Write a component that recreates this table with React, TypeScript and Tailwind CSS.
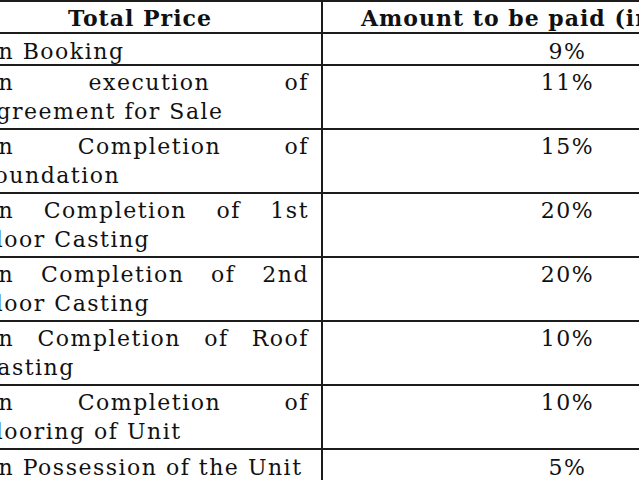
const rows = [
  { label: "On Booking", amount: "9%", tall: false },
  { label: "On execution of Agreement for Sale", amount: "11%", tall: true },
  { label: "On Completion of Foundation", amount: "15%", tall: true },
  { label: "On Completion of 1st Floor Casting", amount: "20%", tall: true },
  { label: "On Completion of 2nd Floor Casting", amount: "20%", tall: true },
  { label: "On Completion of Roof Casting", amount: "10%", tall: true },
  { label: "On Completion of Flooring of Unit", amount: "10%", tall: true },
  { label: "On Possession of the Unit", amount: "5%", tall: false },
];

export default function App() {
  return (
    <div className="w-[639px] h-[480px] overflow-hidden bg-white">
      <table
        className="ml-[-29px] table-fixed border-collapse text-[#111] font-['DejaVu_Serif',serif] text-[22px] tracking-[1.5px]"
        style={{ width: 841 }}
      >
        <colgroup>
          <col className="w-[350px]" />
          <col className="w-[491px]" />
        </colgroup>
        <thead>
          <tr className="h-[32px]">
            <th className="border-2 border-[#1c1c1c] pr-[14px] pt-[1px] text-center font-bold leading-[28px] tracking-[1px]">
              Total Price
            </th>
            <th className="border-2 border-[#1c1c1c] pl-[38px] pt-[1px] text-left font-bold leading-[28px] tracking-[1px] whitespace-nowrap">
              Amount to be paid (in Rupees)
            </th>
          </tr>
        </thead>
        <tbody>
          {rows.map((r) => (
            <tr key={r.label} className={r.tall ? "h-[64px]" : "h-[32px]"}>
              <td
                className={
                  r.tall
                    ? "border-2 border-[#1c1c1c] pl-[6px] pr-[12px] pt-[2px] align-top text-justify leading-[29px]"
                    : "border-2 border-[#1c1c1c] pl-[6px] pr-[12px] pt-[5px] align-top text-justify leading-[25px]"
                }
              >
                {r.label}
              </td>
              <td
                className={
                  r.tall
                    ? "border-2 border-[#1c1c1c] pt-[2px] align-top text-center leading-[29px]"
                    : "border-2 border-[#1c1c1c] pt-[5px] align-top text-center leading-[25px]"
                }
              >
                {r.amount}
              </td>
            </tr>
          ))}
        </tbody>
      </table>
    </div>
  );
}
